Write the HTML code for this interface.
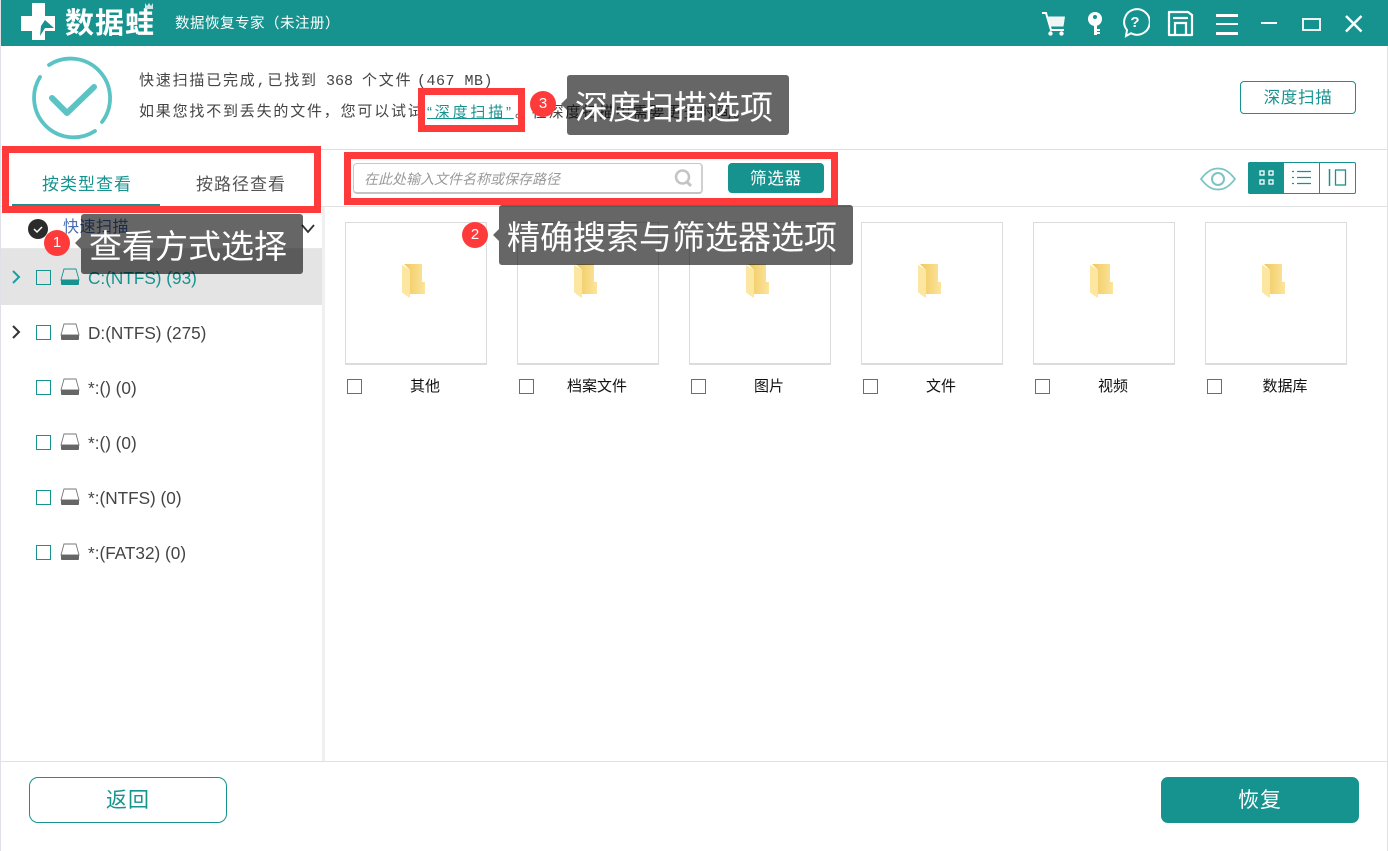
<!DOCTYPE html>
<html lang="zh"><head><meta charset="utf-8"><title>数据恢复专家</title>
<style>
html,body{margin:0;padding:0;background:#fff;}
#p{position:relative;width:1388px;height:851px;overflow:hidden;background:#fff;font-family:"Liberation Sans","WenQuanYi Zen Hei","Noto Sans CJK SC",sans-serif;}
#p div,#p svg{position:absolute;}
.t{white-space:nowrap;}
.s{font-family:"Liberation Mono","WenQuanYi Zen Hei","Noto Sans CJK SC",monospace;}
.red{border:7px solid #ff3a3a;box-sizing:border-box;}
.tip{background:rgba(0,0,0,.6);border-radius:3px;color:#fff;font-size:33px;line-height:65px;height:60px;box-sizing:border-box;padding-right:8px;text-align:center;white-space:nowrap;font-family:"Liberation Sans","Noto Sans CJK SC",sans-serif;}
.badge{width:26px;height:26px;border-radius:50%;background:#ff3a3a;color:#fff;font-size:15px;line-height:26px;text-align:center;}
.arrow{width:0;height:0;border:6px solid transparent;border-right-color:rgba(0,0,0,.6);}
.cb{width:13px;height:13px;border:1px solid #16938f;box-sizing:content-box;}
.card{width:140px;height:140px;border:1px solid #dcdcdc;border-bottom:2px solid #dcdcdc;box-sizing:content-box;background:#fff;}
.lbl{font-size:15px;color:#111;width:90px;text-align:center;top:378px;line-height:18px;}
.dr{font-size:17.2px;color:#444;line-height:20px;white-space:nowrap;}
.l1{top:72px;font-size:15px;line-height:20px;color:#444;}
.l2{top:103px;font-size:15px;line-height:20px;letter-spacing:1.800px;}
</style></head><body><div id="p">
<svg width="0" height="0" style="left:0;top:0"><defs>
<linearGradient id="fg" x1="0" x2="1" y1="0" y2="0"><stop offset="0" stop-color="#f0c95f"/><stop offset="1" stop-color="#fde49c"/></linearGradient>
<g id="fo"><path d="M2 0h18v18h3v12H8V6z" fill="url(#fg)"/><path d="M0 1l8 5v28l-6-4-2-2z" fill="#fde69f"/></g>
<g id="dk"><path d="M4 1h12l3 11H1z" fill="none" stroke="#777" stroke-width=".9"/><rect x="1" y="12" width="18" height="5" rx="1" fill="#666"/></g>
</defs></svg>

<!-- window edges -->
<div style="left:0;top:0;width:1px;height:851px;background:#dfe1e6"></div>
<div style="right:0;top:46px;width:1px;height:805px;background:#e2e2e2"></div>

<!-- title bar -->
<div style="left:1px;top:0;width:1387px;height:46px;background:#16938f"></div>
<svg style="left:20px;top:2px" width="36" height="40" viewBox="0 0 36 40"><path d="M12 1h13v13h10v15H25v9H12V29H1V14h11z" fill="#fff"/><path d="M25 18l9 8H25l-5 8 1-10z" fill="#16938f"/></svg>
<div class="t" style="left:65px;top:6px;font-size:29px;line-height:36px;font-weight:bold;color:#fff;letter-spacing:1px;font-family:'Liberation Sans','Noto Sans CJK SC',sans-serif">数据蛙</div>
<svg style="left:143px;top:2px" width="14" height="12" viewBox="0 0 14 12"><path d="M2 1l2 3 2-3 2 3 2-3v6H2z" fill="#cfe7e6"/></svg>
<div class="t" style="left:175px;top:14px;font-size:14.5px;line-height:20px;color:#fff;letter-spacing:.5px">数据恢复专家（未注册）</div>

<svg style="left:1040px;top:10px" width="28" height="28" viewBox="0 0 28 28"><path d="M2 3h4l5 17h13" fill="none" stroke="#fff" stroke-width="2"/><path d="M8 6.500h17l-1.500 10H10.500z" fill="#f1f5f8"/><circle cx="10.500" cy="23.500" r="2.200" fill="#fff"/><circle cx="21.500" cy="23.500" r="2.200" fill="#fff"/></svg>
<svg style="left:1086px;top:11px" width="18" height="26" viewBox="0 0 18 26"><circle cx="9" cy="8" r="7" fill="#fff"/><circle cx="9" cy="6" r="2" fill="#16938f"/><path d="M8 14h3v10H8zM11 18h3v2h-3zM11 21h3v2h-3z" fill="#fff"/></svg>
<svg style="left:1120px;top:8px" width="30" height="30" viewBox="0 0 30 30"><path d="M6 28l1-6a12.800 12.800 0 1 1 4 3.300z" fill="none" stroke="#fff" stroke-width="2"/><text x="15" y="19" font-size="15" font-weight="bold" text-anchor="middle" fill="#fff" font-family="Liberation Sans">?</text></svg>
<svg style="left:1167px;top:10px" width="27" height="27" viewBox="0 0 27 27"><path d="M2 2h19l4 3v20H2z" fill="none" stroke="#fff" stroke-width="2.200" stroke-linejoin="round"/><path d="M6 8h15" stroke="#fff" stroke-width="2.200"/><path d="M8 25V13h11v12" fill="none" stroke="#fff" stroke-width="2.200"/></svg>
<div style="left:1216px;top:14px;width:22px;height:3px;background:#fff"></div>
<div style="left:1216px;top:23px;width:22px;height:2px;background:#fff"></div>
<div style="left:1216px;top:32px;width:22px;height:3px;background:#fff"></div>
<div style="left:1261px;top:22px;width:16px;height:2px;background:#fff"></div>
<div style="left:1302px;top:18px;width:15px;height:9px;border:2px solid #e9f3f3"></div>
<svg style="left:1344px;top:14px" width="20" height="20" viewBox="0 0 20 20"><path d="M2 2l15.500 15.500M17.500 2L2 17.500" stroke="#fff" stroke-width="2.500" fill="none"/></svg>

<!-- status area -->
<svg style="left:29px;top:56px" width="86" height="86" viewBox="0 0 86 86"><path d="M20 9A39.500 39.500 0 0 1 73 66" fill="none" stroke="#5cc3c5" stroke-width="3.800" stroke-linecap="round"/><path d="M66 75A39.500 39.500 0 0 1 11 21" fill="none" stroke="#5cc3c5" stroke-width="3.800" stroke-linecap="round"/><path d="M23 42l15 15 27-26" fill="none" stroke="#5cc3c5" stroke-width="6" stroke-linecap="round" stroke-linejoin="round"/></svg>
<div class="t s l1" style="left:139px;letter-spacing:1.800px">快速扫描已完成,已找到</div>
<div class="t s l1" style="left:326px">368</div>
<div class="t s l1" style="left:362px;letter-spacing:1.800px">个文件</div>
<div class="t s l1" style="left:417px;letter-spacing:.5px">(467 MB)</div>
<div class="t s l2" style="left:139px;color:#444">如果您找不到丢失的文件，您可以试试</div>
<div class="t l2" style="left:427px;color:#16938f;text-decoration:underline;letter-spacing:2.800px">“深度扫描”</div>
<div class="t l2" style="left:515px;color:#444">。在深度扫描中需要更多时间。</div>
<div class="t" style="left:1240px;top:81px;width:114px;height:31px;border:1px solid #16938f;border-radius:4px;color:#16938f;font-size:16.5px;line-height:33px;text-align:center;letter-spacing:.7px">深度扫描</div>

<div style="left:1px;top:149px;width:1386px;height:1px;background:#dedede"></div>
<div style="left:322px;top:206px;width:1065px;height:1px;background:#e2e2e2"></div>
<div style="left:1px;top:206px;width:321px;height:1px;background:#e2e2e2"></div>

<!-- tabs -->
<div class="t" style="left:42px;top:174px;font-size:17px;line-height:22px;color:#16938f;letter-spacing:1px">按类型查看</div>
<div class="t" style="left:196px;top:174px;font-size:17px;line-height:22px;color:#555;letter-spacing:1px">按路径查看</div>
<div style="left:12px;top:204px;width:148px;height:2px;background:#16938f"></div>

<!-- toolbar -->
<div style="left:353px;top:163px;width:347px;height:28px;border:1px solid #c9c9c9;border-bottom:2px solid #c4c4c4;border-right:2px solid #d0d0d0;border-radius:4px;box-sizing:content-box"></div>
<div class="t" style="left:364px;top:170px;font-size:14px;line-height:18px;color:#9a9a9a;font-style:italic">在此处输入文件名称或保存路径</div>
<svg style="left:673px;top:168px" width="22" height="20" viewBox="0 0 22 20"><circle cx="9.500" cy="9" r="6.500" fill="none" stroke="#c4c4c4" stroke-width="2.500"/><path d="M14 14l4 4" stroke="#c4c4c4" stroke-width="3"/></svg>
<div class="t" style="left:728px;top:163px;width:96px;height:30px;background:#16938f;border-radius:4px;color:#fff;font-size:16.500px;line-height:32px;text-align:center;letter-spacing:.8px">筛选器</div>

<svg style="left:1199px;top:167px" width="38" height="24" viewBox="0 0 38 24"><path d="M2 12C9 3 14 1.500 19 1.500S29 3 36 12c-7 9-12 10.500-17 10.500S9 21 2 12z" fill="none" stroke="#7cc4c4" stroke-width="1.800"/><circle cx="19" cy="12" r="6" fill="none" stroke="#7cc4c4" stroke-width="2"/></svg>
<div style="left:1248px;top:162px;width:106px;height:30px;border:1px solid #16938f;border-radius:2px"></div>
<div style="left:1248px;top:162px;width:36px;height:32px;background:#16938f;border-radius:2px 0 0 2px"></div>
<div style="left:1319px;top:162px;width:1px;height:31px;background:#16938f"></div>
<svg style="left:1258px;top:169px" width="18" height="18" viewBox="0 0 18 18"><g fill="none" stroke="#fff" stroke-width="1.300"><rect x="2" y="2" width="4" height="4"/><rect x="11" y="2" width="4" height="4"/><rect x="2" y="11" width="4" height="4"/><rect x="11" y="11" width="4" height="4"/></g></svg>
<svg style="left:1291px;top:169px" width="22" height="18" viewBox="0 0 22 18"><path d="M1 2.500h2M6 2.500h14M1 8.500h2M6 8.500h14M1 14.500h2M6 14.500h14" stroke="#16938f" stroke-width="1.300" fill="none"/></svg>
<svg style="left:1327px;top:168px" width="20" height="20" viewBox="0 0 20 20"><path d="M2.500 1v17" stroke="#16938f" stroke-width="1.500"/><rect x="8.500" y="2" width="10" height="15" fill="none" stroke="#16938f" stroke-width="1.300"/></svg>

<!-- left tree -->
<div style="left:322px;top:207px;width:3px;height:554px;background:#f0f0f0"></div>
<div style="left:1px;top:249px;width:321px;height:56px;background:#e4e4e4"></div>
<div style="left:1px;top:248px;width:321px;height:1px;background:#e8e8e8"></div>
<svg style="left:27px;top:218px" width="22" height="22" viewBox="0 0 22 22"><circle cx="11" cy="11" r="10" fill="#2b2b2b"/><path d="M7 11l3 3 5-5" stroke="#fff" stroke-width="1.500" fill="none"/></svg>
<div class="t" style="left:63px;top:218px;font-size:16px;line-height:20px;color:#4a6fb0;letter-spacing:.5px">快速扫描</div>
<svg style="left:300px;top:223px" width="16" height="12" viewBox="0 0 16 12"><path d="M2 2l6 7 6-7" fill="none" stroke="#333" stroke-width="1.800"/></svg>

<svg style="left:11px;top:270px" width="12" height="14" viewBox="0 0 12 14"><path d="M2 1l6 6-6 6" fill="none" stroke="#16a0a0" stroke-width="2"/></svg>
<div class="cb" style="left:36px;top:270px"></div>
<svg style="left:60px;top:268px" width="20" height="18" viewBox="0 0 20 18"><path d="M4 1h12l3 11H1z" fill="none" stroke="#16938f" stroke-width=".9"/><rect x="1" y="12" width="18" height="5" rx="1" fill="#16938f"/></svg>
<div class="dr" style="left:88px;top:268px;color:#16938f">C:(NTFS) (93)</div>

<svg style="left:11px;top:325px" width="12" height="14" viewBox="0 0 12 14"><path d="M2 1l6 6-6 6" fill="none" stroke="#333" stroke-width="2"/></svg>
<div class="cb" style="left:36px;top:325px"></div>
<svg style="left:60px;top:323px" width="20" height="18" viewBox="0 0 20 18"><use href="#dk"/></svg>
<div class="dr" style="left:88px;top:323px">D:(NTFS) (275)</div>

<div class="cb" style="left:36px;top:380px"></div>
<svg style="left:60px;top:378px" width="20" height="18" viewBox="0 0 20 18"><use href="#dk"/></svg>
<div class="dr" style="left:88px;top:378px">*:() (0)</div>

<div class="cb" style="left:36px;top:435px"></div>
<svg style="left:60px;top:433px" width="20" height="18" viewBox="0 0 20 18"><use href="#dk"/></svg>
<div class="dr" style="left:88px;top:433px">*:() (0)</div>

<div class="cb" style="left:36px;top:490px"></div>
<svg style="left:60px;top:488px" width="20" height="18" viewBox="0 0 20 18"><use href="#dk"/></svg>
<div class="dr" style="left:88px;top:488px">*:(NTFS) (0)</div>

<div class="cb" style="left:36px;top:545px"></div>
<svg style="left:60px;top:543px" width="20" height="18" viewBox="0 0 20 18"><use href="#dk"/></svg>
<div class="dr" style="left:88px;top:543px">*:(FAT32) (0)</div>

<!-- cards -->
<div class="card" style="left:345px;top:222px"></div>
<div class="card" style="left:517px;top:222px"></div>
<div class="card" style="left:689px;top:222px"></div>
<div class="card" style="left:861px;top:222px"></div>
<div class="card" style="left:1033px;top:222px"></div>
<div class="card" style="left:1205px;top:222px"></div>

<svg style="left:402px;top:264px" width="24" height="34" viewBox="0 0 24 34"><use href="#fo"/></svg>
<svg style="left:574px;top:264px" width="24" height="34" viewBox="0 0 24 34"><use href="#fo"/></svg>
<svg style="left:746px;top:264px" width="24" height="34" viewBox="0 0 24 34"><use href="#fo"/></svg>
<svg style="left:918px;top:264px" width="24" height="34" viewBox="0 0 24 34"><use href="#fo"/></svg>
<svg style="left:1090px;top:264px" width="24" height="34" viewBox="0 0 24 34"><use href="#fo"/></svg>
<svg style="left:1262px;top:264px" width="24" height="34" viewBox="0 0 24 34"><use href="#fo"/></svg>

<div class="cb" style="left:347px;top:379px"></div><div class="lbl" style="left:380px">其他</div>
<div class="cb" style="left:519px;top:379px"></div><div class="lbl" style="left:552px">档案文件</div>
<div class="cb" style="left:691px;top:379px"></div><div class="lbl" style="left:724px">图片</div>
<div class="cb" style="left:863px;top:379px"></div><div class="lbl" style="left:896px">文件</div>
<div class="cb" style="left:1035px;top:379px"></div><div class="lbl" style="left:1068px">视频</div>
<div class="cb" style="left:1207px;top:379px"></div><div class="lbl" style="left:1240px">数据库</div>

<!-- footer -->
<div style="left:1px;top:761px;width:1386px;height:1px;background:#e0e0e6"></div>
<div class="t" style="left:29px;top:777px;width:196px;height:44px;border:1px solid #16938f;border-radius:9px;color:#16938f;font-size:21px;line-height:46px;text-align:center;letter-spacing:1px">返回</div>
<div class="t" style="left:1161px;top:777px;width:198px;height:46px;background:#16938f;border-radius:7px;color:#fff;font-size:21px;line-height:48px;text-align:center;letter-spacing:1px">恢复</div>

<!-- annotations -->
<div class="red" style="left:2px;top:146px;width:319px;height:67px"></div>
<div class="red" style="left:344px;top:152px;width:494px;height:53px"></div>
<div class="red" style="left:418px;top:88px;width:107px;height:44px"></div>

<div class="tip" style="left:81px;top:214px;width:222px">查看方式选择</div>
<div class="arrow" style="left:69px;top:237px"></div>
<div class="badge" style="left:44px;top:230px">1</div>

<div class="tip" style="left:499px;top:205px;width:354px">精确搜索与筛选器选项</div>
<div class="arrow" style="left:487px;top:229px"></div>
<div class="badge" style="left:462px;top:222px">2</div>

<div class="tip" style="left:567px;top:75px;width:222px">深度扫描选项</div>
<div class="arrow" style="left:555px;top:98px"></div>
<div class="badge" style="left:530px;top:91px">3</div>

</div></body></html>
